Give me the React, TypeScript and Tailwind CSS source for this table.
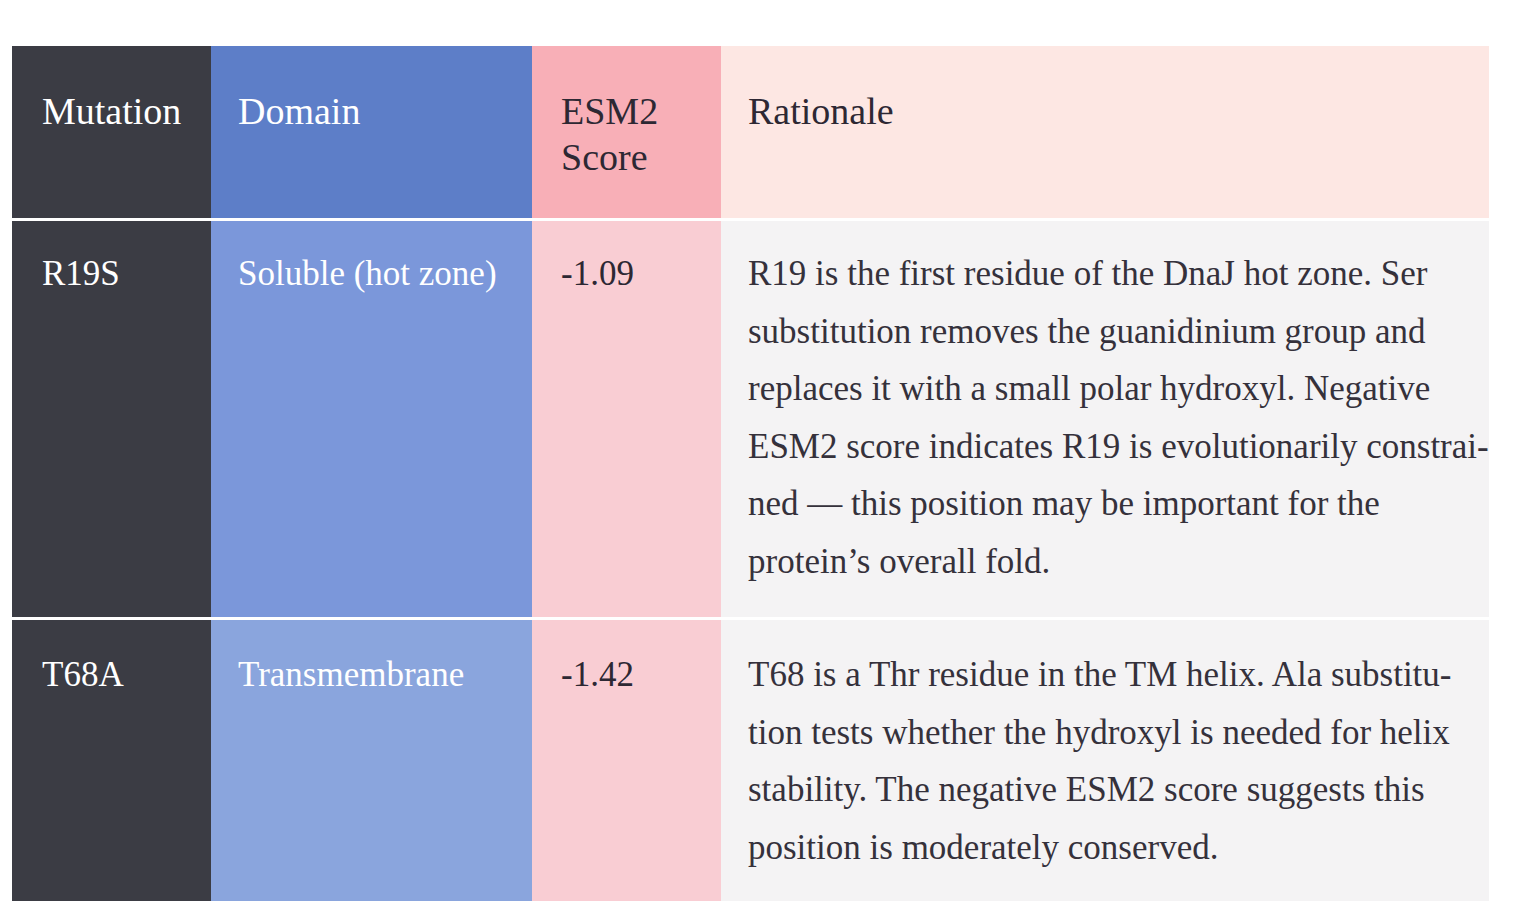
import React from 'react'

const serif = { fontFamily: '"Liberation Serif", "DejaVu Serif", serif' }

const rows = [
  {
    mutation: 'R19S',
    domain: 'Soluble (hot zone)',
    score: '-1.09',
    blue: 'bg-[#7b97da]',
    height: 'h-[396px]',
    pad: 'pt-[24px]',
    lines: [
      'R19 is the first residue of the DnaJ hot zone. Ser',
      'substitution removes the guanidinium group and',
      'replaces it with a small polar hydroxyl. Negative',
      'ESM2 score indicates R19 is evolutionarily constrai-',
      'ned \u2014 this position may be important for the',
      'protein\u2019s overall fold.',
    ],
  },
  {
    mutation: 'T68A',
    domain: 'Transmembrane',
    score: '-1.42',
    blue: 'bg-[#8aa5dd]',
    height: 'h-[281px]',
    pad: 'pt-[26px]',
    lines: [
      'T68 is a Thr residue in the TM helix. Ala substitu-',
      'tion tests whether the hydroxyl is needed for helix',
      'stability. The negative ESM2 score suggests this',
      'position is moderately conserved.',
    ],
  },
]

export default function App() {
  return (
    <div className='min-h-[911px] w-full bg-white pt-[46px] pl-[12px]' style={serif}>
      <div className='w-[1477px] flex flex-col gap-[3px] bg-white'>
        {/* header */}
        <div className='grid grid-cols-[199px_321px_189px_768px] h-[172px] text-[38px] leading-[46px]'>
          <div className='bg-[#3b3c44] text-white pl-[30px] pt-[42px]'>Mutation</div>
          <div className='bg-[#5d7ec8] text-white pl-[27px] pt-[42px]'>Domain</div>
          <div className='bg-[#f8afb7] text-[#2d2833] pl-[29px] pt-[42px]'>ESM2<br />Score</div>
          <div className='bg-[#fde7e3] text-[#2d2833] pl-[27px] pt-[42px]'>Rationale</div>
        </div>

        {rows.map((r) => (
          <div key={r.mutation} className={'grid grid-cols-[199px_321px_189px_768px] text-[35px] leading-[57.6px] ' + r.height}>
            <div className={'bg-[#3b3c44] text-white pl-[30px] ' + r.pad}>{r.mutation}</div>
            <div className={r.blue + ' text-white pl-[27px] ' + r.pad}>{r.domain}</div>
            <div className={'bg-[#f9cdd3] text-[#2d2833] pl-[29px] ' + r.pad}>{r.score}</div>
            <div className={'bg-[#f4f3f4] text-[#35313b] pl-[27px] ' + r.pad}>
              {r.lines.map((l, i) => (
                <div key={i} className='whitespace-nowrap'>{l}</div>
              ))}
            </div>
          </div>
        ))}
      </div>
    </div>
  )
}
